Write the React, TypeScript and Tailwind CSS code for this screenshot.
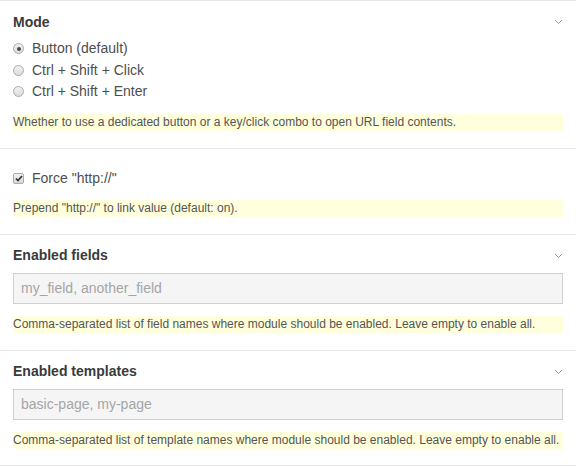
import React from "react";

const font = { fontFamily: '"Liberation Sans", Arial, sans-serif' };

function Chevron() {
  return (
    <svg width="9" height="6" viewBox="0 0 9 6" className="shrink-0">
      <polyline points="1,1 4.5,4.5 8,1" fill="none" stroke="#8e9cab" strokeWidth="1" />
    </svg>
  );
}

function Radio({ checked }: { checked?: boolean }) {
  return (
    <span className="w-[11px] h-[11px] rounded-full border border-[#ababab] bg-gradient-to-b from-[#f2f2f2] to-[#dcdcdc] flex items-center justify-center shrink-0">
      {checked && <span className="w-[4px] h-[4px] rounded-full bg-[#4a4a4a]" />}
    </span>
  );
}

function Checkbox() {
  return (
    <span className="w-[11px] h-[11px] rounded-[2px] border border-[#ababab] bg-gradient-to-b from-[#f2f2f2] to-[#d8d8d8] flex items-center justify-center shrink-0">
      <svg width="8" height="7" viewBox="0 0 8 7">
        <polyline points="1,3.5 3,5.5 7,1" fill="none" stroke="#333" strokeWidth="1.7" />
      </svg>
    </span>
  );
}

function Desc({ children }: { children: React.ReactNode }) {
  return (
    <div className="bg-[#ffffdd] text-[12px] leading-[17px] h-[17px] text-[#555] whitespace-nowrap">
      {children}
    </div>
  );
}

function Heading({ children }: { children: React.ReactNode }) {
  return (
    <div className="flex items-center justify-between h-[18px]">
      <span className="font-bold text-[14px] text-[#3a3a3a]">{children}</span>
      <Chevron />
    </div>
  );
}

function TextField({ placeholder }: { placeholder: string }) {
  return (
    <input
      readOnly
      placeholder={placeholder}
      className="mt-[8px] block w-full h-[31px] border border-[#d0d0d0] bg-[#f5f5f5] px-[7px] text-[14px] text-[#333] placeholder:text-[#a5a5a5] outline-none"
      style={font}
    />
  );
}

export default function App() {
  const radios = ["Button (default)", "Ctrl + Shift + Click", "Ctrl + Shift + Enter"];
  return (
    <div className="w-[576px] h-[467px] bg-white overflow-hidden" style={font}>
      <section className="border-t border-[#e6e6e6] px-[13px] pt-[12px] pb-[17px]">
        <Heading>Mode</Heading>
        <div className="mt-[7px] flex flex-col">
          {radios.map((r, i) => (
            <div key={r} className="flex items-center h-[21.5px] gap-[8px] text-[14px] text-[#4e4e4e]">
              <Radio checked={i === 0} />
              <span>{r}</span>
            </div>
          ))}
        </div>
        <div className="mt-[11px]">
          <Desc>Whether to use a dedicated button or a key/click combo to open URL field contents.</Desc>
        </div>
      </section>
      <section className="border-t border-[#e6e6e6] px-[13px] pt-[19px] pb-[17px]">
        <div className="flex items-center h-[21px] gap-[8px] text-[14px] text-[#4e4e4e]">
          <Checkbox />
          <span>Force "http://"</span>
        </div>
        <div className="mt-[11px]">
          <Desc>Prepend "http://" to link value (default: on).</Desc>
        </div>
      </section>
      <section className="border-t border-[#e6e6e6] px-[13px] pt-[12px] pb-[17px]">
        <Heading>Enabled fields</Heading>
        <TextField placeholder="my_field, another_field" />
        <div className="mt-[12px]">
          <Desc>Comma-separated list of field names where module should be enabled. Leave empty to enable all.</Desc>
        </div>
      </section>
      <section className="border-t border-b border-[#e6e6e6] px-[13px] pt-[12px] pb-[16px]">
        <Heading>Enabled templates</Heading>
        <TextField placeholder="basic-page, my-page" />
        <div className="mt-[12px]">
          <Desc>Comma-separated list of template names where module should be enabled. Leave empty to enable all.</Desc>
        </div>
      </section>
    </div>
  );
}
